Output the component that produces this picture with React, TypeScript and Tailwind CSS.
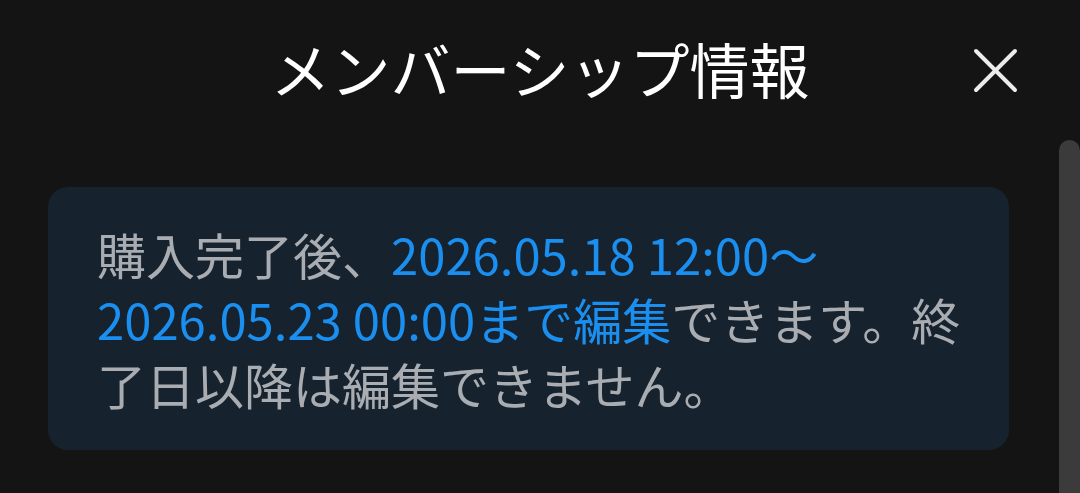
import React from 'react';

const font = { fontFamily: '"Noto Sans CJK JP", "Noto Sans", sans-serif' };

export default function App() {
  return (
    <div
      className="w-full h-[493px] bg-[#141414] flex flex-col overflow-hidden"
      style={font}
    >
      {/* Header */}
      <div className="h-[140px] shrink-0 flex items-center px-[62px]">
        <div className="w-[45px]" />
        <h1 className="flex-1 text-center text-white text-[60px] leading-none font-normal pb-[4px]">
          メンバーシップ情報
        </h1>
        <button className="w-[45px] h-[45px] flex items-center justify-center" aria-label="close">
          <svg viewBox="0 0 45 45" width="45" height="45" fill="none" stroke="#ececec" strokeWidth="4" strokeLinecap="round">
            <path d="M3 3 L42 42 M42 3 L3 42" />
          </svg>
        </button>
      </div>

      {/* Body */}
      <div className="flex-1 flex min-h-0">
        <div className="flex-1 pl-[48px] pr-[50px] pt-[47px]">
          <div className="bg-[#16222e] rounded-[20px] px-[49px] py-[34px]">
            <p className="text-[49px] leading-[65px] text-[#a9adb2] tracking-normal whitespace-nowrap">
              購入完了後、<span className="text-[#1a8ff0]">2026.05.18 12:00〜</span>
              <br />
              <span className="text-[#1a8ff0]">2026.05.23 00:00まで編集</span>できます。終
              <br />
              了日以降は編集できません。
            </p>
          </div>
        </div>
        <div className="w-[22px] bg-[#3b3b3b] rounded-t-[11px]" />
      </div>
    </div>
  );
}
